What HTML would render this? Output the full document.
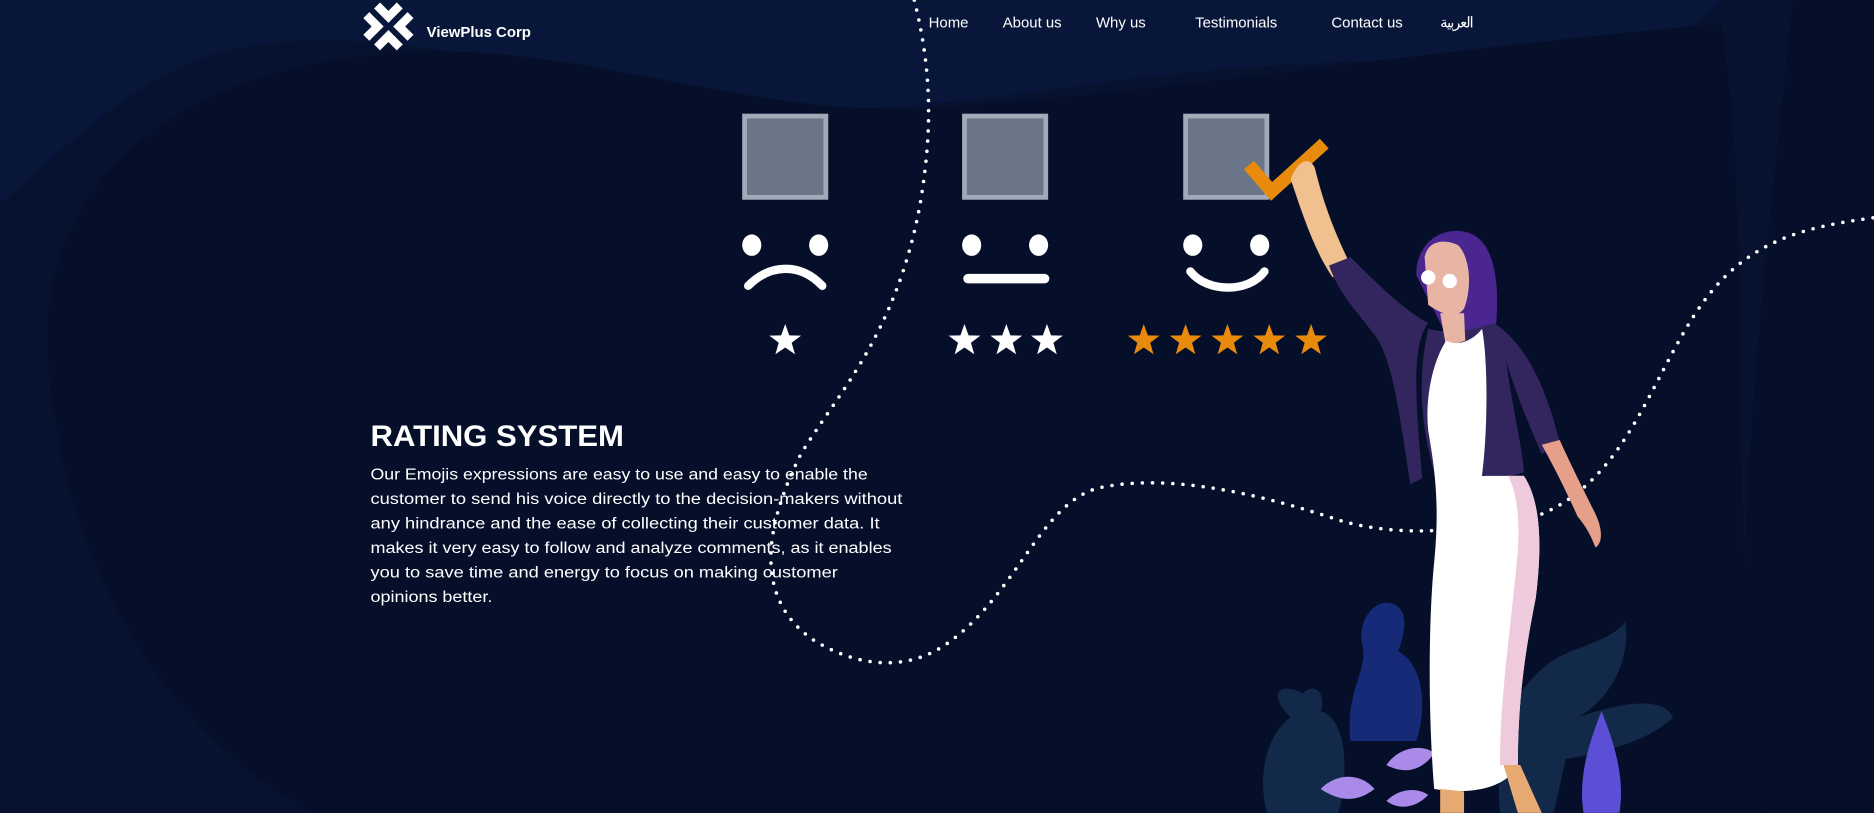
<!DOCTYPE html>
<html><head><meta charset="utf-8">
<style>
html,body{margin:0;padding:0;background:#050f2b;overflow:hidden}
svg{display:block}
text{font-family:"Liberation Sans","Noto Sans CJK SC",sans-serif;fill:#fff}
</style></head>
<body>
<svg width="1874" height="813" viewBox="0 0 1568 680" xmlns="http://www.w3.org/2000/svg">
<rect width="1568" height="680" fill="#06122f"/>
<path d="M0 0 H1500 C1480 200 1440 500 1470 680 H1568 V0 Z" fill="#050f2a"/>
<path d="M0 0 H1440 C1400 60 1200 40 1000 60 C850 75 700 110 560 80 C420 50 300 20 200 40 C120 55 60 120 0 170 Z" fill="#081739"/>
<path d="M40 300 C30 150 150 60 320 45 C480 30 620 100 780 90 C1000 75 1200 40 1440 20 C1470 200 1440 450 1480 680 H260 C120 600 50 450 40 300 Z" fill="#050f2a"/>

<g fill="none" stroke="#fff" stroke-width="3" stroke-linecap="round" stroke-dasharray="0 8.5">
<path d="M765 0 C780 60 780 110 770 170 C750 280 700 330 670 380 C640 440 630 500 680 535 C720 560 760 560 790 540 C850 500 870 420 920 408 C980 395 1060 415 1120 435 C1170 450 1230 445 1290 430 C1360 400 1380 320 1420 260 C1460 200 1510 190 1568 182"/>
</g>

<g fill="#fff">
<polygon points="313,7 318,2 325,9 332,2 337,7 325,19"/>
<polygon points="313,37 318,42 325,35 332,42 337,37 325,25"/>
<polygon points="309,10 304,15 311,22 304,29 309,34 321,22"/>
<polygon points="341,10 346,15 339,22 346,29 341,34 329,22"/>
</g>
<text x="357" y="31" font-size="12.5" font-weight="bold">ViewPlus Corp</text>

<g font-size="12.5">
<text x="777" y="23">Home</text>
<text x="839" y="23">About us</text>
<text x="917" y="23">Why us</text>
<text x="1000" y="23">Testimonials</text>
<text x="1114" y="23">Contact us</text>
<text x="1205" y="23" textLength="28">العربية</text>
</g>

<g fill="#6b7588" stroke="#a2a9b8" stroke-width="4">
<rect x="623" y="97" width="68" height="68"/>
<rect x="807" y="97" width="68" height="68"/>
<rect x="992" y="97" width="68" height="68"/>
</g>
<g fill="#fff">
<ellipse cx="629" cy="205" rx="8" ry="9"/><ellipse cx="685" cy="205" rx="8" ry="9"/>
<ellipse cx="813" cy="205" rx="8" ry="9"/><ellipse cx="869" cy="205" rx="8" ry="9"/>
<ellipse cx="998" cy="205" rx="8" ry="9"/><ellipse cx="1054" cy="205" rx="8" ry="9"/>
<rect x="806" y="229" width="72" height="8" rx="4"/>
</g>
<g fill="none" stroke="#fff" stroke-width="7" stroke-linecap="round">
<path d="M626 239 C645 220 670 220 688 239"/>
<path d="M996 227 C1010 245 1045 245 1058 227"/>
</g>
<defs><polygon id="st" points="0,-14 3.4,-4.5 13.3,-4.3 5.4,1.7 8.2,11.3 0,5.6 -8.2,11.3 -5.4,1.7 -13.3,-4.3 -3.4,-4.5"/></defs>
<g fill="#fff">
<use href="#st" x="657" y="285"/>
<use href="#st" x="807" y="285"/><use href="#st" x="842" y="285"/><use href="#st" x="876" y="285"/>
</g>
<g fill="#e88a0c">
<use href="#st" x="957" y="285"/><use href="#st" x="992" y="285"/><use href="#st" x="1027" y="285"/><use href="#st" x="1062" y="285"/><use href="#st" x="1097" y="285"/>
</g>
<polyline points="1045,138 1064,160 1108,120" fill="none" stroke="#e88a0c" stroke-width="11"/>

<g>
<path d="M1060 680 C1050 640 1065 610 1080 600 C1060 580 1070 570 1090 580 C1100 570 1110 580 1105 595 C1125 600 1130 640 1120 680 Z" fill="#13294a"/>
<path d="M1130 620 C1125 580 1145 560 1140 540 C1135 520 1150 500 1165 505 C1180 510 1175 530 1170 545 C1190 555 1195 590 1185 620 Z" fill="#172a78"/>
<path d="M1255 680 C1250 620 1265 580 1290 560 C1310 540 1345 540 1360 520 C1365 560 1340 590 1320 600 C1350 590 1390 580 1400 600 C1380 620 1340 630 1310 635 L1300 680 Z" fill="#13294a"/>
<path d="M1325 680 C1320 650 1330 620 1340 595 C1350 620 1360 650 1355 680 Z" fill="#5b4fd6"/>
<path d="M1105 660 C1120 645 1140 648 1150 660 C1135 672 1120 670 1105 660 Z" fill="#a98ae8"/>
<path d="M1160 640 C1170 625 1190 622 1200 630 C1190 645 1175 648 1160 640 Z" fill="#a98ae8"/>
<path d="M1160 670 C1170 660 1185 658 1195 665 C1185 676 1170 678 1160 670 Z" fill="#a98ae8"/>
</g>

<g>
<path d="M1080 150 C1085 135 1095 130 1100 140 C1110 180 1120 200 1130 222 L1115 232 C1100 210 1090 180 1080 150 Z" fill="#f0c08f"/>
<path d="M1185 230 C1185 200 1210 188 1230 195 C1255 205 1255 250 1250 290 C1245 300 1225 300 1215 290 Z" fill="#4b2590"/>
<path d="M1112 222 L1130 215 C1150 235 1175 260 1195 270 C1180 290 1185 340 1190 400 L1180 405 C1170 340 1165 300 1150 280 C1135 260 1120 245 1112 222 Z" fill="#33265e"/>
<path d="M1195 275 C1215 280 1235 275 1250 270 C1280 290 1295 330 1305 370 L1290 380 C1275 345 1265 320 1260 300 C1265 340 1275 380 1275 395 C1260 400 1245 400 1235 395 L1200 395 C1190 360 1185 320 1195 275 Z" fill="#33265e"/>
<path d="M1192 215 C1195 200 1210 200 1220 205 C1230 215 1232 240 1225 258 C1218 268 1205 262 1195 255 Z" fill="#e8b5a4"/>
<path d="M1205 262 L1225 262 L1226 285 L1210 290 Z" fill="#e8b5a4"/>
<circle cx="1195" cy="232" r="6" fill="#fff"/><circle cx="1213" cy="235" r="6" fill="#fff"/>
<path d="M1290 372 L1305 368 C1315 390 1325 410 1335 430 C1342 445 1340 455 1335 458 C1330 445 1325 438 1320 432 C1310 410 1300 390 1290 372 Z" fill="#e6a08a"/>
<path d="M1210 285 C1220 290 1232 285 1240 275 C1245 300 1245 360 1240 398 L1275 398 C1290 420 1290 460 1285 500 C1275 550 1270 590 1270 640 C1260 660 1230 665 1200 660 C1195 600 1195 520 1200 470 C1205 420 1200 390 1195 360 C1192 330 1200 300 1210 285 Z" fill="#fff"/>
<path d="M1262 398 L1275 398 C1290 420 1290 460 1285 500 C1275 550 1270 590 1270 640 L1255 640 C1255 580 1265 520 1270 460 C1272 430 1268 410 1262 398 Z" fill="#efc9dc"/>
<path d="M1205 660 L1225 662 L1225 680 L1205 680 Z" fill="#e6aa72"/>
<path d="M1258 640 L1272 640 L1290 680 L1270 680 Z" fill="#e6aa72"/>
</g>

<text x="310" y="373" font-size="25" font-weight="bold" textLength="212" lengthAdjust="spacingAndGlyphs">RATING SYSTEM</text>
<g font-size="13.4">
<text x="310" y="401" textLength="416" lengthAdjust="spacingAndGlyphs">Our Emojis expressions are easy to use and easy to enable the</text>
<text x="310" y="421.5" textLength="445" lengthAdjust="spacingAndGlyphs">customer to send his voice directly to the decision-makers without</text>
<text x="310" y="442" textLength="426" lengthAdjust="spacingAndGlyphs">any hindrance and the ease of collecting their customer data. It</text>
<text x="310" y="462.5" textLength="436" lengthAdjust="spacingAndGlyphs">makes it very easy to follow and analyze comments, as it enables</text>
<text x="310" y="483" textLength="391" lengthAdjust="spacingAndGlyphs">you to save time and energy to focus on making customer</text>
<text x="310" y="503.5" textLength="102" lengthAdjust="spacingAndGlyphs">opinions better.</text>
</g>
</svg>
</body></html>
